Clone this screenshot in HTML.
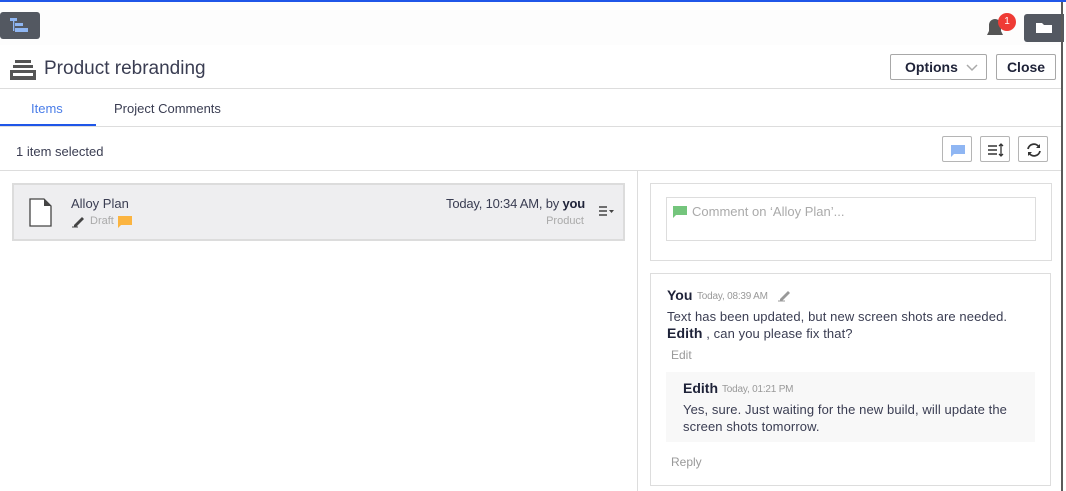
<!DOCTYPE html>
<html><head><style>
*{box-sizing:border-box;margin:0;padding:0}
body{width:1066px;height:491px;overflow:hidden;background:#fff;font-family:"Liberation Sans",sans-serif;color:#2e3146;position:relative;font-size:13px}
.abs{position:absolute}
.btn{position:absolute;border:1px solid #a8a8a8;border-radius:2px;background:#fff;font-weight:bold;font-size:14px;color:#1e2238;}
.ib{position:absolute;top:136px;width:30px;height:26px;border:1px solid #b5b5b5;border-radius:2px;background:#fff}
</style></head><body>
<div class="abs" style="left:0;top:0;width:1066px;height:2px;background:#1f56e8"></div>
<div class="abs" style="left:0;top:2px;width:1062px;height:43px;background:#fdfdfd"></div>
<div class="abs" style="left:0;top:12px;width:40px;height:27px;background:#535861;border-radius:3px">
<svg class="abs" style="left:0;top:0" width="40" height="27"><rect x="10" y="6" width="7" height="3" fill="#8fb6f3"/><rect x="13" y="9" width="1.3" height="10" fill="#8fb6f3"/><rect x="15" y="11" width="8" height="3" fill="#8fb6f3"/><rect x="15" y="16" width="13" height="4" fill="#8fb6f3"/></svg></div>
<svg class="abs" style="left:985px;top:16px" width="22" height="22"><path d="M2 19 L4 15 V9 A6 6 0 0 1 16 9 V15 L18 19 Z" fill="#555"/></svg>
<div class="abs" style="left:998px;top:13px;width:18px;height:18px;border-radius:50%;background:#ef3b35;color:#fff;font-size:10px;text-align:center;line-height:18px">1</div>
<div class="abs" style="left:1024px;top:14px;width:40px;height:28px;background:#535861;border-radius:3px 0 0 3px"><svg class="abs" style="left:0;top:0" width="40" height="28"><path d="M12 9h6l2 2h8v8h-16z" fill="#fff"/></svg></div>
<div class="abs" style="left:1061px;top:2px;width:2px;height:489px;background:#5a5a5a"></div>
<svg class="abs" style="left:10px;top:60px" width="28" height="20"><rect x="5" y="0" width="16" height="3" fill="#555"/><rect x="3" y="5" width="20" height="3" fill="#555"/><rect x="3" y="10" width="20" height="3" fill="#555"/><path d="M0 10v10h26v-10h-3v6H3v-6z" fill="#555"/></svg>
<div class="abs" style="left:44px;top:58px;font-size:19px;color:#3a3d52">Product rebranding</div>
<div class="btn" style="left:890px;top:54px;width:97px;height:26px;line-height:24px;padding-left:14px">Options<svg class="abs" style="left:75px;top:9px" width="12" height="8"><path d="M1 1l5 5 5-5" stroke="#aaa" stroke-width="1.5" fill="none"/></svg></div>
<div class="btn" style="left:996px;top:54px;width:60px;height:26px;line-height:24px;text-align:center">Close</div>
<div class="abs" style="left:0;top:88px;width:1061px;height:1px;background:#ddd"></div>
<div class="abs" style="left:31px;top:101px;color:#4a7de8">Items</div>
<div class="abs" style="left:114px;top:101px;color:#3a3d52">Project Comments</div>
<div class="abs" style="left:0;top:124px;width:96px;height:2px;background:#1f56e8"></div>
<div class="abs" style="left:0;top:126px;width:1061px;height:1px;background:#ddd"></div>
<div class="abs" style="left:16px;top:144px;color:#3a3d52">1 item selected</div>
<div class="ib" style="left:942px"><svg width="30" height="26"><path d="M8 8h14v9h-11l-3 3z" fill="#8fb6f3"/></svg></div>
<div class="ib" style="left:980px"><svg width="30" height="26"><path d="M7 9h9M7 13h9M7 17h9" stroke="#333" stroke-width="1.6"/><path d="M20 7v12M18 9l2-2 2 2M18 17l2 2 2-2" stroke="#333" stroke-width="1.3" fill="none"/></svg></div>
<div class="ib" style="left:1018px"><svg width="30" height="26"><path d="M9 12a6 6 0 0 1 11-2M21 14a6 6 0 0 1-11 2" stroke="#333" stroke-width="1.8" fill="none"/><path d="M21 7v4h-4zM9 19v-4h4z" fill="#333"/></svg></div>
<div class="abs" style="left:0;top:170px;width:1061px;height:1px;background:#ddd"></div>
<div class="abs" style="left:637px;top:171px;width:1px;height:320px;background:#ddd"></div>
<div class="abs" style="left:12px;top:183px;width:613px;height:58px;background:#eeeef0;border:2px solid #dcdcdc"></div>
<svg class="abs" style="left:29px;top:198px" width="24" height="30"><path d="M1 1h14l7 7v20H1z" fill="#fff" stroke="#444" stroke-width="1.3"/><path d="M15 1l7 7h-7z" fill="#444"/></svg>
<div class="abs" style="left:71px;top:196px;font-size:13px;color:#3a3d52">Alloy Plan</div>
<svg class="abs" style="left:72px;top:214px" width="16" height="14"><path d="M2 11l8-8 2 2-8 8H2z" fill="#444"/><path d="M0 13h6" stroke="#444"/></svg>
<div class="abs" style="left:90px;top:215px;font-size:11px;color:#aaa">Draft</div>
<svg class="abs" style="left:117px;top:215px" width="16" height="14"><path d="M1 1h14v9H4l-3 3z" fill="#fbb440"/></svg>
<div class="abs" style="right:481px;top:196px;font-size:13px;color:#3a3d52;letter-spacing:-0.2px">Today, 10:34 AM, by <b style="color:#1e2238">you</b></div>
<div class="abs" style="right:482px;top:215px;font-size:11px;color:#aaa">Product</div>
<svg class="abs" style="left:598px;top:206px" width="18" height="12"><path d="M1 1h8M1 5h8M1 9h8" stroke="#444" stroke-width="1.5"/><path d="M11 4h5l-2.5 3z" fill="#444"/></svg>
<div class="abs" style="left:650px;top:183px;width:402px;height:78px;border:1px solid #ddd"></div>
<div class="abs" style="left:666px;top:197px;width:370px;height:44px;border:1px solid #ddd"></div>
<svg class="abs" style="left:672px;top:205px" width="16" height="14"><path d="M1 1h14v9H4l-3 3z" fill="#74c57c"/></svg>
<div class="abs" style="left:692px;top:204px;color:#aaa;font-size:13px">Comment on ‘Alloy Plan’...</div>
<div class="abs" style="left:650px;top:273px;width:401px;height:213px;border:1px solid #ddd"></div>
<div class="abs" style="left:667px;top:287px;font-weight:bold;font-size:14px;color:#1e2238">You</div>
<div class="abs" style="left:697px;top:291px;font-size:10px;color:#999;letter-spacing:-0.2px">Today, 08:39 AM</div>
<svg class="abs" style="left:778px;top:288px" width="16" height="14"><path d="M2 11l8-8 2 2-8 8H2z" fill="#999"/><path d="M0 13h7" stroke="#999"/></svg>
<div class="abs" style="left:667px;top:308px;font-size:13px;line-height:17px;color:#3a3d52;letter-spacing:0.1px">Text has been updated, but new screen shots are needed.<br><b style="color:#1e2238;font-size:14px">Edith</b> , can you please fix that?</div>
<div class="abs" style="left:671px;top:348px;font-size:12px;color:#999">Edit</div>
<div class="abs" style="left:666px;top:372px;width:369px;height:70px;background:#f8f8f8"></div>
<div class="abs" style="left:683px;top:380px;font-weight:bold;font-size:14px;color:#1e2238">Edith</div>
<div class="abs" style="left:722px;top:384px;font-size:10px;color:#999;letter-spacing:-0.2px">Today, 01:21 PM</div>
<div class="abs" style="left:683px;top:401px;font-size:13px;line-height:17px;color:#3a3d52;letter-spacing:0.1px">Yes, sure. Just waiting for the new build, will update the<br>screen shots tomorrow.</div>
<div class="abs" style="left:671px;top:455px;font-size:12px;color:#999">Reply</div>
</body></html>
